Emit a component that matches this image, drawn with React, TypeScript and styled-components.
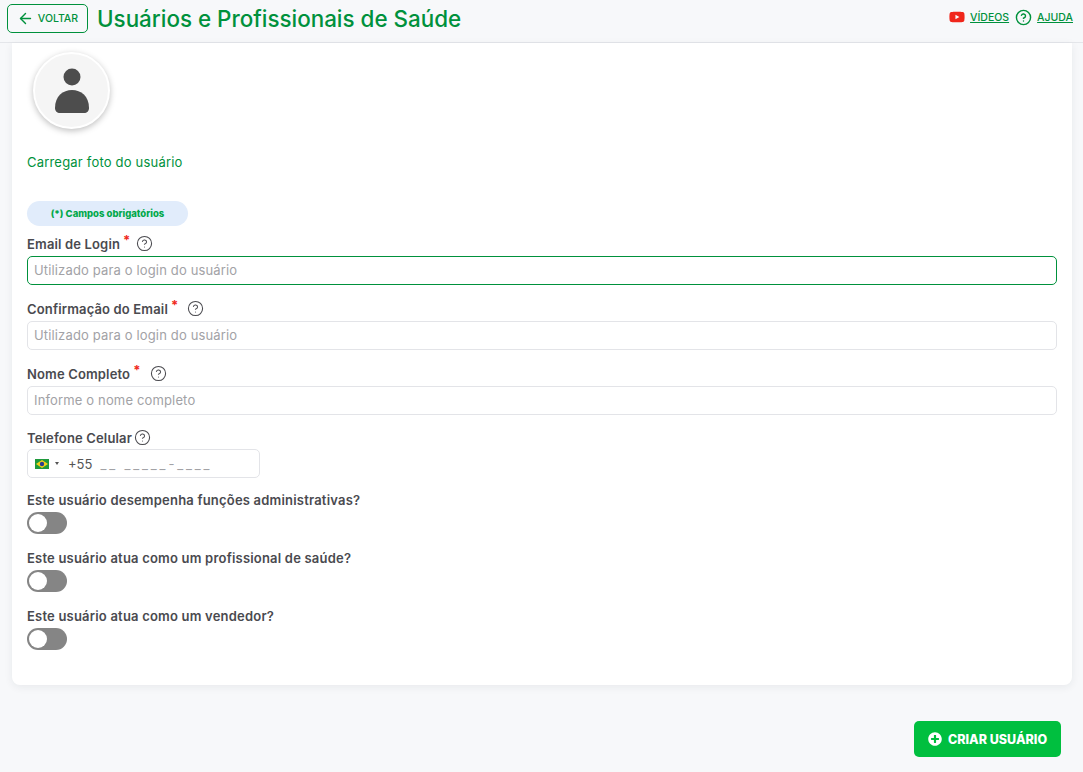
import styled, { createGlobalStyle } from "styled-components";
import { ArrowLeft, CircleHelp } from "lucide-react";
import { FaPlusCircle, FaYoutube } from "react-icons/fa";

const GlobalStyle = createGlobalStyle`
  html, body {
    margin: 0;
    padding: 0;
    background: #f7f8fa;
    font-family: "Inter", "Noto Sans", sans-serif;
  }
  * { box-sizing: border-box; }
`;

const Page = styled.div`
  width: 1083px;
  height: 772px;
  overflow: hidden;
  background: #f7f8fa;
`;

const Header = styled.header`
  height: 43px;
  border-bottom: 1px solid #e4e6ea;
  display: flex;
  align-items: center;
  justify-content: space-between;
  padding: 0 10px 0 7px;
`;

const HeaderLeft = styled.div`
  display: flex;
  align-items: center;
  gap: 9px;
`;

const BackButton = styled.button`
  width: 81px;
  height: 29px;
  margin-top: -5px;
  border: 1px solid #00913c;
  border-radius: 5px;
  background: transparent;
  color: #00913c;
  display: flex;
  align-items: center;
  justify-content: center;
  gap: 4px;
  padding: 0;
  font: 500 10.5px "Inter", sans-serif;
`;

const Title = styled.h1`
  margin: -6px 0 0;
  font-size: 22.4px;
  font-weight: 500;
  color: #00913c;
`;

const HeaderLinks = styled.div`
  display: flex;
  align-items: center;
  margin-top: -8px;
`;

const HeaderLink = styled.a`
  font-size: 10.5px;
  font-weight: 500;
  color: #00913c;
  text-decoration: underline;
  margin-left: 5px;
  margin-right: 6px;
  &:last-child { margin-right: 0; }
`;

const Card = styled.main`
  width: 1060px;
  height: 642px;
  margin-left: 12px;
  background: #fff;
  border-radius: 0 0 8px 8px;
  box-shadow: 0 2px 8px rgba(30, 40, 60, 0.07);
  padding: 9px 15px 0;
`;

const Avatar = styled.div`
  width: 77px;
  height: 77px;
  margin-left: 6px;
  border-radius: 50%;
  background: #f5f5f5;
  border: 2px solid #fff;
  box-shadow: 0 2px 6px rgba(0, 0, 0, 0.25);
  display: flex;
  align-items: center;
  justify-content: center;
`;

const UploadLink = styled.div`
  margin-top: 24px;
  font-size: 13px;
  line-height: 18px;
  letter-spacing: 0.2px;
  color: #00913c;
`;

const RequiredPill = styled.div`
  width: 161px;
  height: 25px;
  margin-top: 30px;
  margin-bottom: 7px;
  border-radius: 13px;
  background: #e1ecfb;
  color: #00a84a;
  font-size: 9.5px;
  font-weight: 800;
  display: flex;
  align-items: center;
  justify-content: center;
`;

const Field = styled.div`
  margin-bottom: 13px;
`;

const LabelRow = styled.div<{ $height: number }>`
  height: ${props => props.$height}px;
  padding-bottom: 2px;
  display: flex;
  align-items: center;
  font-size: 13px;
  font-weight: 600;
  letter-spacing: 0.15px;
  color: #4a4a4f;
`;

const Star = styled.span`
  color: #f02a1c;
  font-size: 13px;
  font-weight: 700;
  line-height: 1;
  margin: -6px 0 0 3px;
`;

const Help = styled(CircleHelp)<{ $gap: number }>`
  width: 17px;
  height: 17px;
  margin-left: ${props => props.$gap}px;
  color: #4a4a4f;
  stroke-width: 1.5;
`;

const Input = styled.input<{ $focused?: boolean }>`
  display: block;
  width: 100%;
  height: 29px;
  padding: 0 6px 2px;
  border-radius: 5px;
  border: 1px solid ${props => props.$focused ? "#00913c" : "#e3e4e8"};
  background: #fff;
  outline: none;
  font: 400 13px "Inter", sans-serif;
  letter-spacing: 0.15px;
  color: #444;
  &::placeholder { color: #a2a2a6; opacity: 1; }
`;

const PhoneBox = styled.div`
  width: 233px;
  height: 29px;
  border: 1px solid #e3e4e8;
  border-radius: 5px;
  display: flex;
  align-items: center;
  padding-left: 7px;
  font-size: 13px;
  color: #555;
`;

const Caret = styled.span`
  width: 0;
  height: 0;
  margin: 0 9px 0 6px;
  border-left: 2px solid transparent;
  border-right: 2px solid transparent;
  border-top: 3px solid #555;
`;

const PhoneMask = styled.span`
  margin-left: 8px;
  color: #a2a2a6;
  letter-spacing: 2.85px;
`;

const SwitchList = styled.div`
  margin-top: 13px;
`;

const SwitchBlock = styled.div`
  height: 58px;
`;

const SwitchLabel = styled.div`
  height: 18px;
  line-height: 18px;
  margin-bottom: 3px;
  font-size: 13px;
  font-weight: 600;
  letter-spacing: 0.2px;
  color: #4a4a4f;
`;

const Toggle = styled.div`
  width: 40px;
  height: 22px;
  border-radius: 11px;
  background: #858585;
  padding: 2px;
`;

const Knob = styled.div`
  width: 18px;
  height: 18px;
  border-radius: 50%;
  background: #fff;
`;

const Footer = styled.div`
  display: flex;
  justify-content: flex-end;
  padding: 36px 22px 0 0;
`;

const CreateButton = styled.button`
  width: 147px;
  height: 36px;
  border: 0;
  border-radius: 5px;
  background: #00bf3f;
  color: #fff;
  display: flex;
  align-items: center;
  justify-content: center;
  gap: 6px;
  padding: 0;
  font: 800 12.5px "Inter", sans-serif;
`;

function Brazil() {
  return (
    <svg width="14" height="10" viewBox="0 0 14 10">
      <rect width="14" height="10" fill="#1f9a3c" />
      <path d="M7 1 13 5 7 9 1 5Z" fill="#f6d21a" />
      <circle cx="7" cy="5" r="2.2" fill="#2b3f8f" />
    </svg>
  );
}

function Person() {
  return (
    <svg width="34" height="46" viewBox="0 0 34 46">
      <circle cx="17" cy="9" r="8.5" fill="#4d4d4d" />
      <path d="M0 40C0 28 8 22 17 22s17 6 17 18c0 3-2 5-5 5H5c-3 0-5-2-5-5Z" fill="#4d4d4d" />
    </svg>
  );
}

const fields = [
  { label: "Email de Login", placeholder: "Utilizado para o login do usuário", focused: true, gap: 6 },
  { label: "Confirmação do Email", placeholder: "Utilizado para o login do usuário", gap: 9 },
  { label: "Nome Completo", placeholder: "Informe o nome completo", gap: 9 },
];

const switches = [
  "Este usuário desempenha funções administrativas?",
  "Este usuário atua como um profissional de saúde?",
  "Este usuário atua como um vendedor?",
];

export default function App() {
  return (
    <Page>
      <GlobalStyle />
      <Header>
        <HeaderLeft>
          <BackButton><ArrowLeft size={17} />VOLTAR</BackButton>
          <Title>Usuários e Profissionais de Saúde</Title>
        </HeaderLeft>
        <HeaderLinks>
          <FaYoutube size={16} color="#f0261b" />
          <HeaderLink>VÍDEOS</HeaderLink>
          <CircleHelp size={17} color="#00913c" />
          <HeaderLink>AJUDA</HeaderLink>
        </HeaderLinks>
      </Header>
      <Card>
        <Avatar><Person /></Avatar>
        <UploadLink>Carregar foto do usuário</UploadLink>
        <RequiredPill>(*) Campos obrigatórios</RequiredPill>
        {fields.map(field => (
          <Field key={field.label}>
            <LabelRow $height={23}>
              {field.label}<Star>*</Star><Help $gap={field.gap} />
            </LabelRow>
            <Input placeholder={field.placeholder} $focused={field.focused} />
          </Field>
        ))}
        <LabelRow $height={21}>Telefone Celular<Help $gap={2} /></LabelRow>
        <PhoneBox>
          <Brazil /><Caret />+55<PhoneMask>__ _____-____</PhoneMask>
        </PhoneBox>
        <SwitchList>
          {switches.map(text => (
            <SwitchBlock key={text}>
              <SwitchLabel>{text}</SwitchLabel>
              <Toggle><Knob /></Toggle>
            </SwitchBlock>
          ))}
        </SwitchList>
      </Card>
      <Footer>
        <CreateButton><FaPlusCircle size={14} />CRIAR USUÁRIO</CreateButton>
      </Footer>
    </Page>
  );
}
